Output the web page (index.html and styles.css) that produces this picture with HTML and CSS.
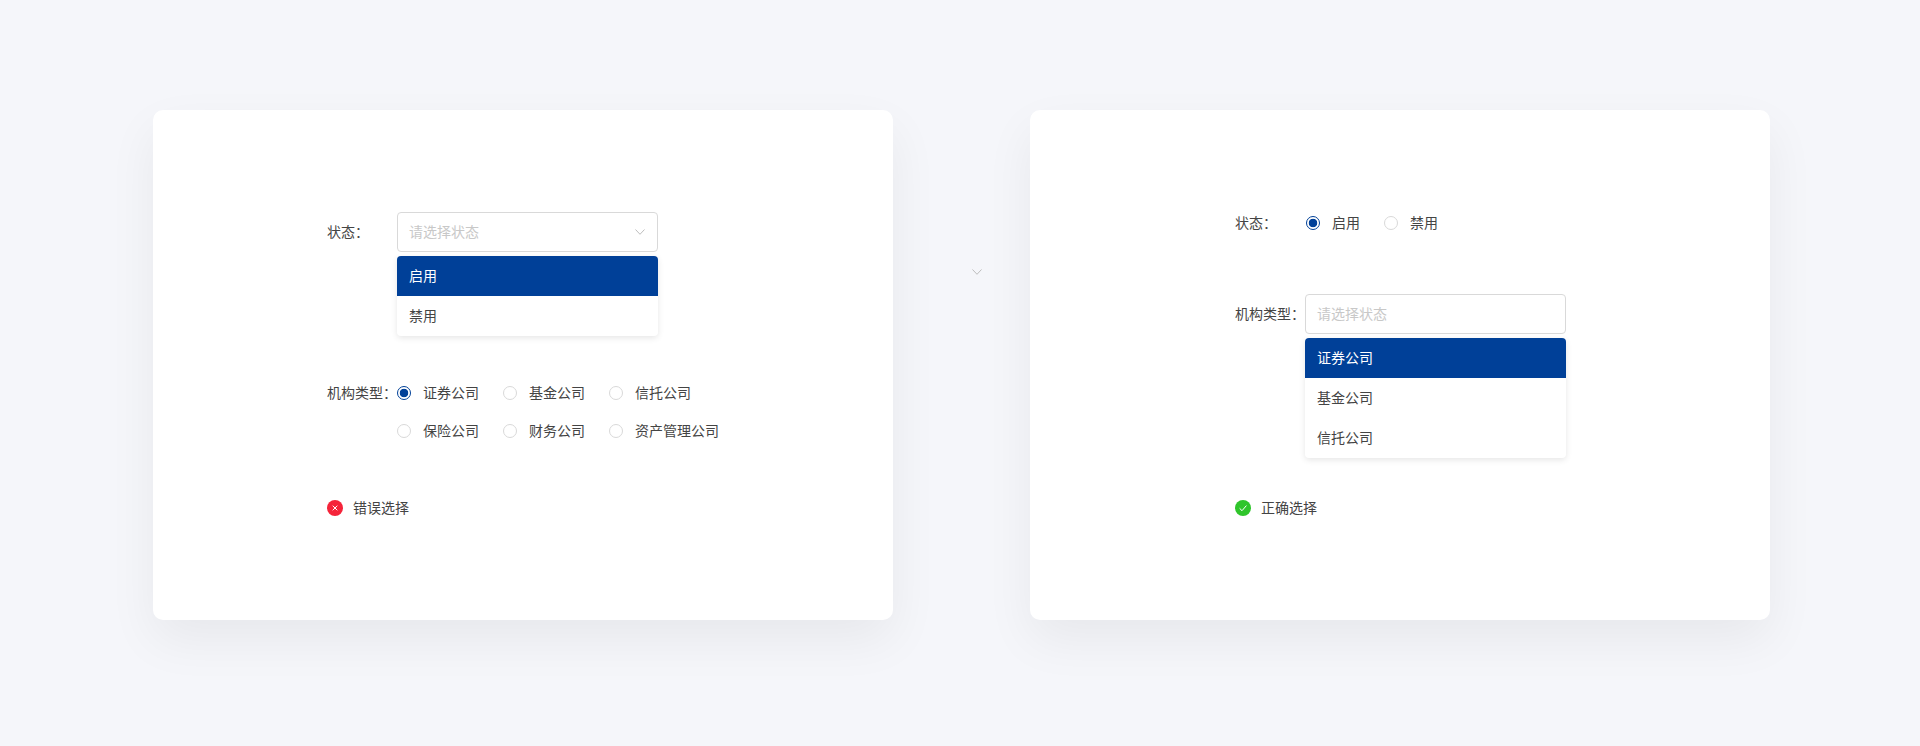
FILE: index.html
```html
<!DOCTYPE html>
<html>
<head>
    <meta charset="UTF-8">
    <title>选择控件</title>
    <link rel="stylesheet" href="styles.css">
</head>
<body>
<div class="page">
    <!-- 错误选择 -->
    <div class="card card_wrong">
        <div class="row row_select">
            <div class="label label_mid">状态：</div>
            <div class="field">
                <div class="select">
                    <span>请选择状态</span>
                    <svg class="arrow" width="10" height="6" viewBox="0 0 10 6"><path d="M.5.5 5 5.3 9.5.5"/></svg>
                </div>
                <div class="menu">
                    <div class="menu_item active">启用</div>
                    <div class="menu_item">禁用</div>
                </div>
            </div>
        </div>
        <div class="row row_type">
            <div class="label">机构类型：</div>
            <div class="radio_grid">
                <label class="radio"><input type="radio" name="type1" checked>证券公司</label>
                <label class="radio"><input type="radio" name="type1">基金公司</label>
                <label class="radio"><input type="radio" name="type1">信托公司</label>
                <label class="radio"><input type="radio" name="type1">保险公司</label>
                <label class="radio"><input type="radio" name="type1">财务公司</label>
                <label class="radio"><input type="radio" name="type1">资产管理公司</label>
            </div>
        </div>
        <div class="result">
            <svg class="result_icon" width="16" height="16" viewBox="0 0 16 16">
                <circle cx="8" cy="8" r="8" fill="#f5243a"/>
                <path d="M5.7 5.7l4.6 4.6M10.3 5.7l-4.6 4.6" stroke="#fff" stroke-width="1" fill="none"/>
            </svg>
            错误选择
        </div>
    </div>

    <svg class="between" width="10" height="6" viewBox="0 0 10 6"><path d="M.5.5 5 5.3 9.5.5"/></svg>

    <!-- 正确选择 -->
    <div class="card card_right">
        <div class="row row_status">
            <div class="label">状态：</div>
            <div class="radio_line">
                <label class="radio"><input type="radio" name="status2" checked>启用</label>
                <label class="radio"><input type="radio" name="status2">禁用</label>
            </div>
        </div>
        <div class="row row_select">
            <div class="label label_mid">机构类型：</div>
            <div class="field">
                <div class="select">
                    <span>请选择状态</span>
                </div>
                <div class="menu">
                    <div class="menu_item active">证券公司</div>
                    <div class="menu_item">基金公司</div>
                    <div class="menu_item">信托公司</div>
                </div>
            </div>
        </div>
        <div class="result">
            <svg class="result_icon" width="16" height="16" viewBox="0 0 16 16">
                <circle cx="8" cy="8" r="8" fill="#2fc52b"/>
                <path d="M4.6 8.3l2.4 2.4 4.4-5.1" stroke="#fff" stroke-width="1" fill="none"/>
            </svg>
            正确选择
        </div>
    </div>
</div>
</body>
</html>
```

FILE: styles.css
```css
*{ box-sizing: border-box;}
body{
    margin: 0;
    font-family: "Noto Sans CJK SC", "Liberation Sans", sans-serif;
    font-size: 14px;
    color: #444;
    background: #f5f6fa;
}
.page{
    display: flex;
    align-items: flex-start;
    height: 746px;
    padding: 110px 0 0 153px;
    overflow: hidden;
}
.card{
    width: 740px;
    height: 510px;
    background: white;
    border-radius: 10px;
    box-shadow: 0 20px 50px rgba(0, 0, 0, 0.06);
    display: flex;
    flex-direction: column;
    padding-top: 102px;
}
.card_wrong{ padding-left: 174px;}
.card_right{ padding-left: 205px;}
.between{
    margin: 159px 48px 0 79px;
    flex: none;
}
.between path,.arrow path{
    fill: none;
    stroke: #bdbdbd;
    stroke-width: 1;
}
.row{ display: flex;}
/* 文字行高都比盒子少2px 让字往上靠一点 */
.label{
    width: 70px;
    flex: none;
    line-height: 22px;
}
.label_mid{ line-height: 38px;}
.field{ width: 261px;}
.select{
    height: 40px;
    padding: 0 11px;
    display: flex;
    align-items: center;
    justify-content: space-between;
    border: 1px solid #d9d9d9;
    border-radius: 4px;
    color: #c8c8c8;
}
.select span{ padding-bottom: 2px;}
.arrow{ margin-right: 1px;}
.menu{
    margin-top: 4px;
    background: white;
    border-radius: 4px;
    box-shadow: 0 2px 6px rgba(0, 0, 0, 0.1);
    overflow: hidden;
}
.menu_item{
    height: 40px;
    line-height: 38px;
    padding-left: 12px;
}
.menu_item.active{
    background: #004098;
    color: white;
}
.row_type{ margin-top: 45px;}
.radio_grid{
    display: grid;
    grid-template-columns: 106px 106px auto;
    row-gap: 14px;
}
.radio_line{
    display: flex;
    padding-left: 1px;
}
.radio_line .radio{ width: 78px;}
.radio{
    display: flex;
    align-items: flex-start;
    height: 24px;
    line-height: 22px;
}
.radio input{
    appearance: none;
    width: 14px;
    height: 14px;
    margin: 5px 12px 0 0;
    border: 1px solid #d9d9d9;
    border-radius: 50%;
    background: white;
    flex: none;
}
.radio input:checked{
    border-color: #004098;
    background: radial-gradient(circle, #004098 4px, white 4.6px);
}
.row_status{ margin-bottom: 59px; margin-top: -1px;}
.result{
    display: flex;
    align-items: flex-start;
    height: 16px;
    line-height: 14px;
}
.result_icon{
    margin-right: 10px;
    flex: none;
}
.card_wrong .result{ margin-top: 57px;}
.card_right .result{ margin-top: 42px;}
```
